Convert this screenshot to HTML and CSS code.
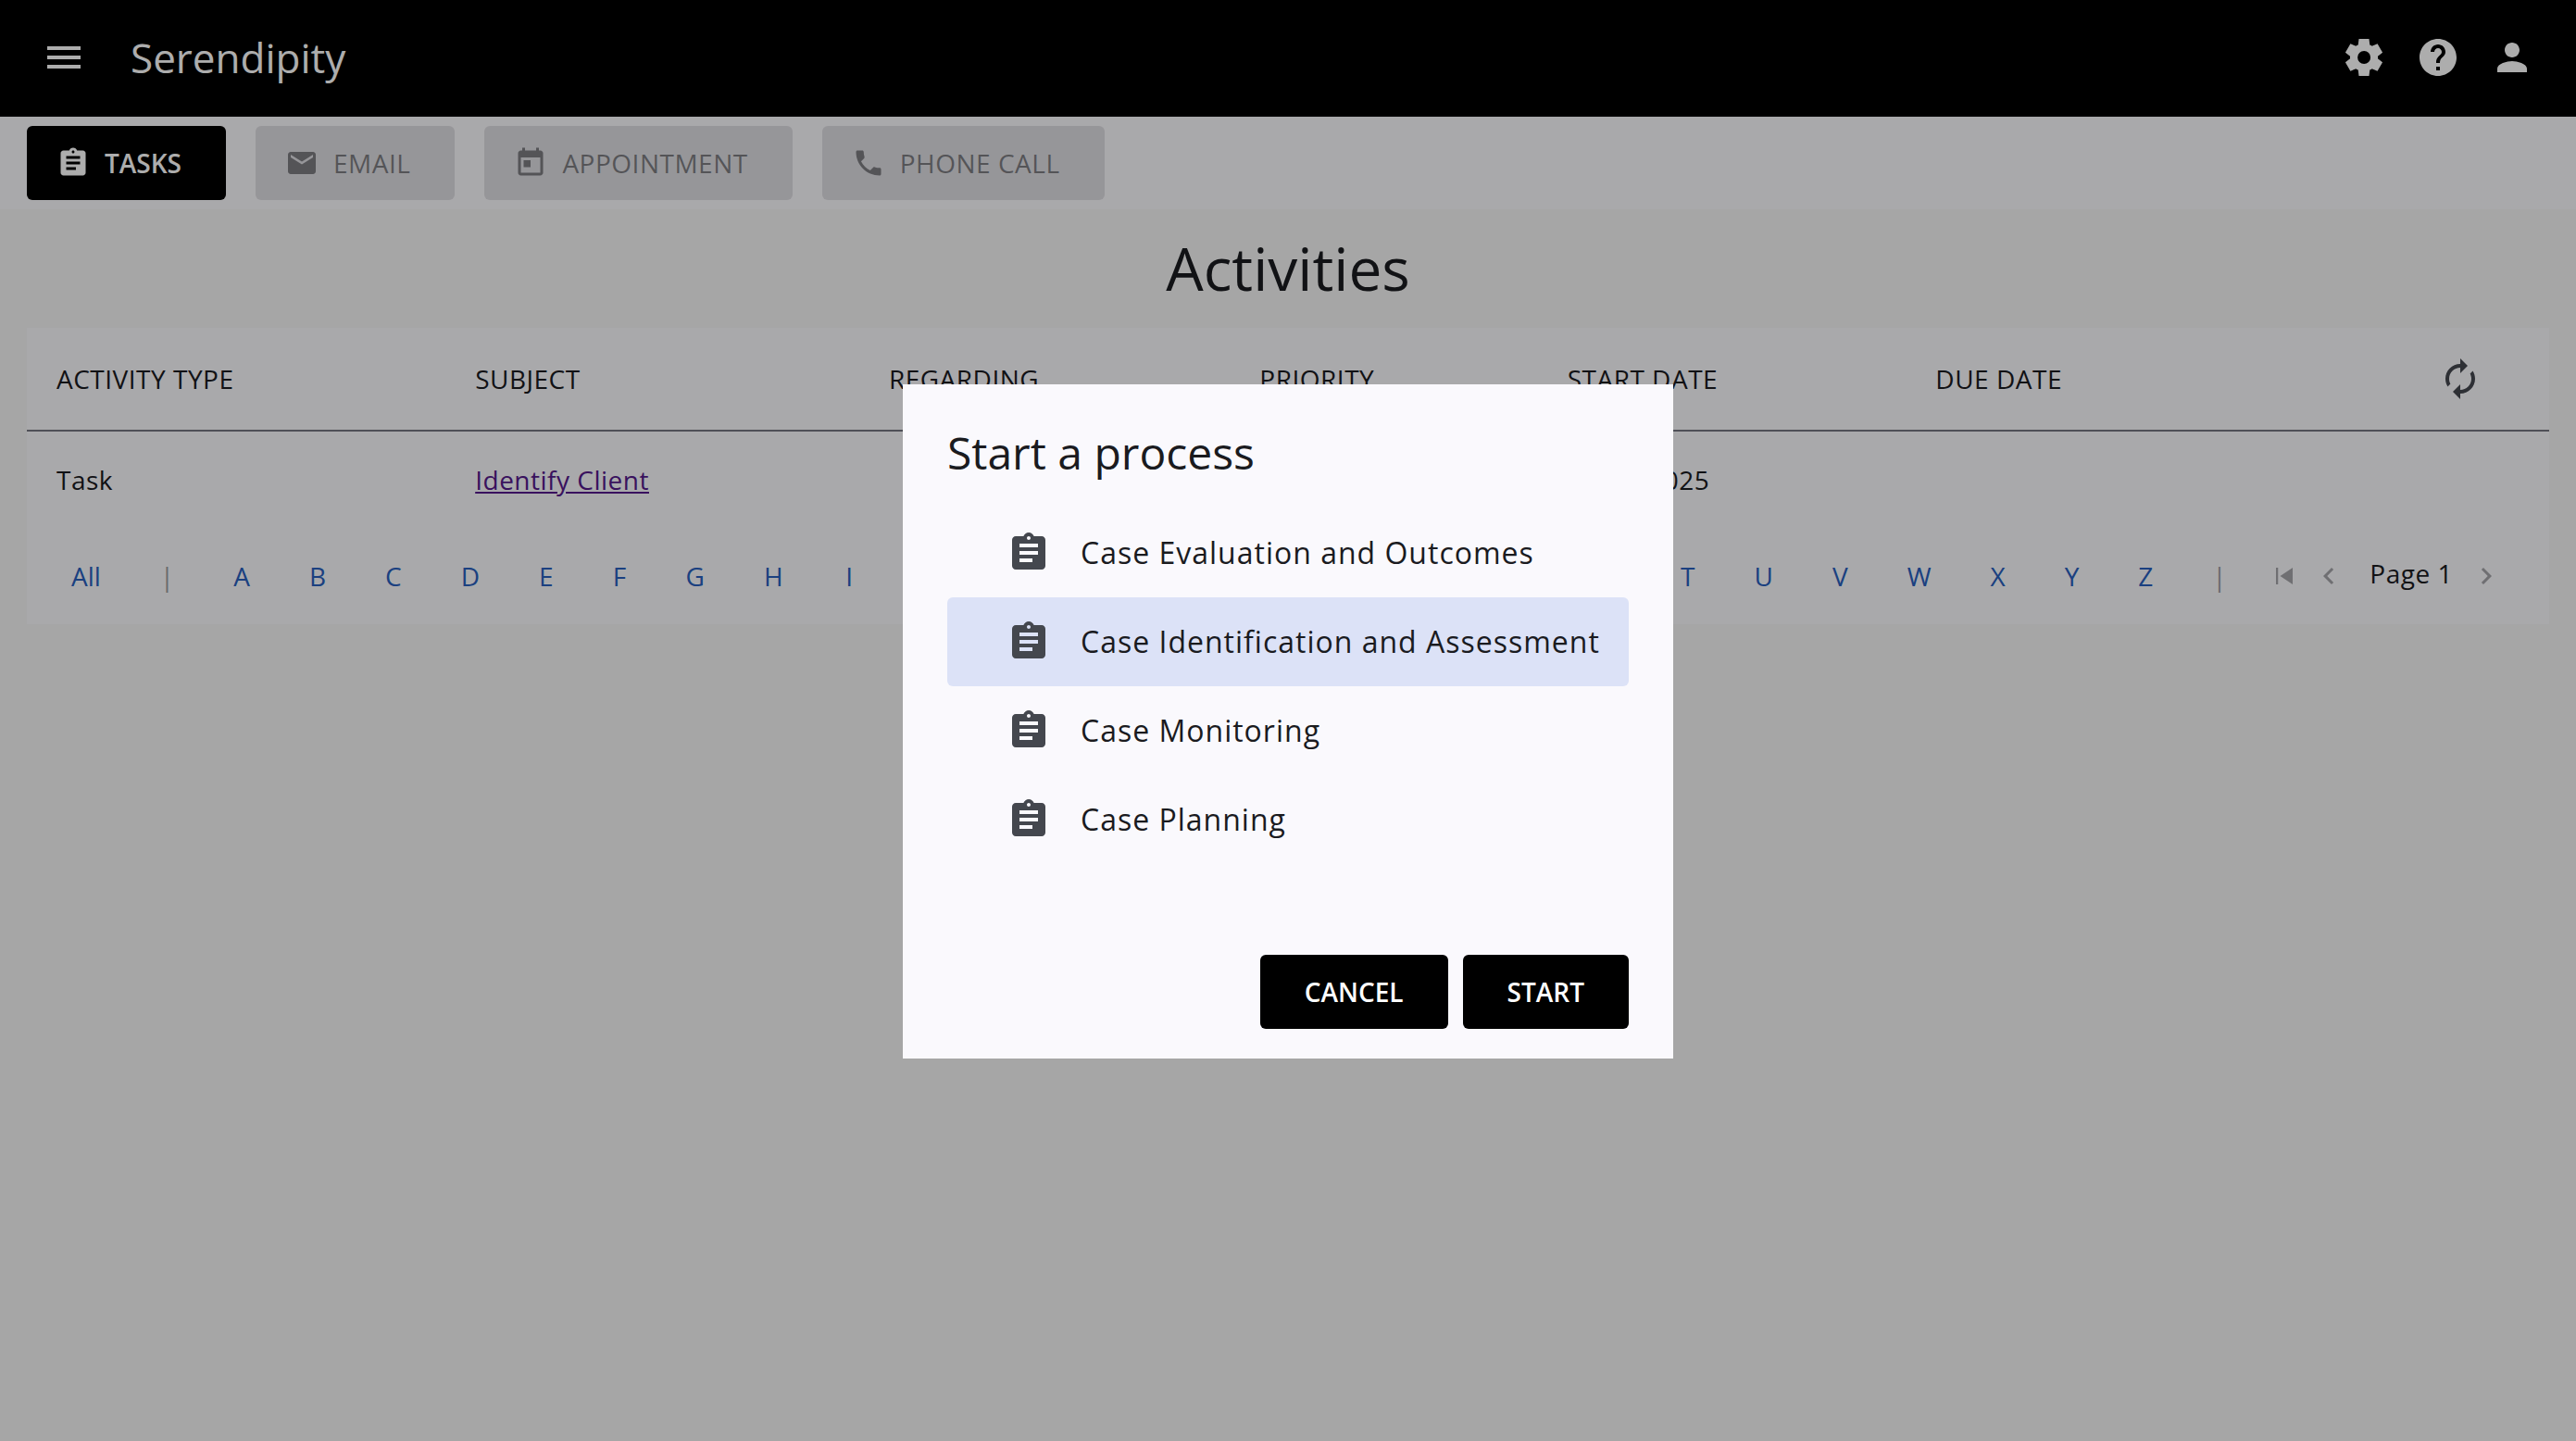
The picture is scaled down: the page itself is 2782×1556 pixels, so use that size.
FILE: index.html
```html
<!DOCTYPE html>
<html lang="en">
<head>
<meta charset="utf-8">
<meta name="viewport" content="width=device-width, initial-scale=1">
<title>Serendipity</title>
<link rel="stylesheet" href="styles.css">
</head>
<body>
<svg class="sprite" aria-hidden="true">
  <symbol id="menu" viewBox="0 0 24 24"><path d="M3 18h18v-2H3v2zm0-5h18v-2H3v2zm0-7v2h18V6H3z"/></symbol>
  <symbol id="settings" viewBox="0 -960 960 960"><path d="m370-80-16-128q-13-5-24.5-12T307-235l-119 50L78-375l103-78q-1-7-1-13.5v-27q0-6.500 1-13.500L78-585l110-190 119 50q11-8 23-15t24-12l16-128h220l16 128q13 5 24.500 12t22.500 15l119-50 110 190-103 78q1 7 1 13.500v27q0 6.500-2 13.500l103 78-110 190-118-50q-11 8-23 15t-24 12L590-80H370Zm112-260q58 0 99-41t41-99q0-58-41-99t-99-41q-59 0-99.500 41T342-480q0 58 40.500 99t99.500 41Z"/></symbol>
  <symbol id="help" viewBox="0 0 24 24"><path d="M12 2C6.480 2 2 6.480 2 12s4.480 10 10 10 10-4.480 10-10S17.520 2 12 2zm1 17h-2v-2h2v2zm2.070-7.750l-.9.920C13.450 12.900 13 13.500 13 15h-2v-.5c0-1.100.45-2.100 1.170-2.830l1.240-1.260c.37-.36.59-.86.59-1.410 0-1.100-.9-2-2-2s-2 .9-2 2H8c0-2.210 1.790-4 4-4s4 1.790 4 4c0 .88-.36 1.680-.93 2.250z"/></symbol>
  <symbol id="person" viewBox="0 0 24 24"><path d="M12 12c2.210 0 4-1.790 4-4s-1.790-4-4-4-4 1.790-4 4 1.790 4 4 4zm0 2c-2.670 0-8 1.340-8 4v2h16v-2c0-2.660-5.330-4-8-4z"/></symbol>
  <symbol id="assignment" viewBox="0 0 24 24"><path d="M19 3h-4.180C14.400 1.840 13.300 1 12 1c-1.300 0-2.400.84-2.820 2H5c-1.100 0-2 .9-2 2v14c0 1.100.9 2 2 2h14c1.100 0 2-.9 2-2V5c0-1.100-.9-2-2-2zm-7 0c.55 0 1 .45 1 1s-.45 1-1 1-1-.45-1-1 .45-1 1-1zm2 14H7v-2h7v2zm3-4H7v-2h10v2zm0-4H7V7h10v2z"/></symbol>
  <symbol id="mail" viewBox="0 0 24 24"><path d="M20 4H4c-1.100 0-1.990.9-1.990 2L2 18c0 1.100.9 2 2 2h16c1.100 0 2-.9 2-2V6c0-1.100-.9-2-2-2zm0 4l-8 5-8-5V6l8 5 8-5v2z"/></symbol>
  <symbol id="today" viewBox="0 0 24 24"><path d="M19 3h-1V1h-2v2H8V1H6v2H5c-1.110 0-1.990.9-1.990 2L3 19c0 1.100.89 2 2 2h14c1.100 0 2-.9 2-2V5c0-1.100-.9-2-2-2zm0 16H5V8h14v11zM7 10h5v5H7z"/></symbol>
  <symbol id="phone" viewBox="0 0 24 24"><path d="M6.620 10.790c1.440 2.830 3.760 5.140 6.590 6.590l2.200-2.200c.27-.27.67-.36 1.020-.24 1.120.37 2.330.57 3.570.57.55 0 1 .45 1 1V20c0 .55-.45 1-1 1-9.390 0-17-7.610-17-17 0-.55.45-1 1-1h3.500c.55 0 1 .45 1 1 0 1.250.2 2.450.57 3.570.11.35.03.74-.25 1.020l-2.200 2.200z"/></symbol>
  <symbol id="autorenew" viewBox="0 0 24 24"><path d="M12 6v3l4-4-4-4v3c-4.420 0-8 3.580-8 8 0 1.570.46 3.030 1.240 4.260L6.700 14.800c-.45-.83-.7-1.790-.7-2.800 0-3.310 2.690-6 6-6zm6.760 1.740L17.300 9.200c.44.840.7 1.790.7 2.800 0 3.310-2.690 6-6 6v-3l-4 4 4 4v-3c4.420 0 8-3.580 8-8 0-1.570-.46-3.030-1.240-4.260z"/></symbol>
  <symbol id="first" viewBox="0 0 24 24"><path d="M6 6h1.500v12H6zm3 6l9 6V6z"/></symbol>
  <symbol id="before" viewBox="0 0 24 24"><path d="M15.410 7.410L14 6l-6 6 6 6 1.410-1.410L10.830 12z"/></symbol>
  <symbol id="next" viewBox="0 0 24 24"><path d="M10 6L8.590 7.410 13.170 12l-4.580 4.590L10 18l6-6z"/></symbol>
</svg>

<header class="app-bar">
  <button class="icon-button" aria-label="Menu"><svg class="icon"><use href="#menu"/></svg></button>
  <span class="brand">Serendipity</span>
  <div class="app-actions">
    <button class="icon-button" aria-label="Settings"><svg class="icon"><use href="#settings"/></svg></button>
    <button class="icon-button" aria-label="Help"><svg class="icon"><use href="#help"/></svg></button>
    <button class="icon-button" aria-label="Account"><svg class="icon"><use href="#person"/></svg></button>
  </div>
</header>

<nav class="toolbar" aria-label="Create activity">
  <button class="button with-icon"><svg class="icon-small"><use href="#assignment"/></svg>TASKS</button>
  <button class="button with-icon" disabled><svg class="icon-small"><use href="#mail"/></svg>EMAIL</button>
  <button class="button with-icon" disabled><svg class="icon-small"><use href="#today"/></svg>APPOINTMENT</button>
  <button class="button with-icon" disabled><svg class="icon-small"><use href="#phone"/></svg>PHONE CALL</button>
</nav>

<main class="content">
  <h1 class="page-title">Activities</h1>
  <section class="panel">
    <table class="activities">
      <colgroup>
        <col class="col-type"><col class="col-subject"><col class="col-regarding"><col class="col-priority"><col class="col-start"><col class="col-due"><col class="col-refresh">
      </colgroup>
      <thead>
        <tr>
          <th>ACTIVITY TYPE</th><th>SUBJECT</th><th>REGARDING</th><th>PRIORITY</th><th>START DATE</th><th>DUE DATE</th>
          <th class="refresh-cell"><button class="icon-button refresh" aria-label="Refresh"><svg class="icon"><use href="#autorenew"/></svg></button></th>
        </tr>
      </thead>
      <tbody>
        <tr><td>Task</td><td><a class="subject-link" href="#identify-client">Identify Client</a></td><td></td><td></td><td>01/01/2025</td><td></td><td></td></tr>
      </tbody>
    </table>
    <div class="pager">
      <div class="letters">
        <button class="letter">All</button><button class="letter" disabled>|</button><button class="letter">A</button><button class="letter">B</button><button class="letter">C</button><button class="letter">D</button><button class="letter">E</button><button class="letter">F</button><button class="letter">G</button><button class="letter">H</button><button class="letter">I</button><button class="letter">J</button><button class="letter">K</button><button class="letter">L</button><button class="letter">M</button><button class="letter">N</button><button class="letter">O</button><button class="letter">P</button><button class="letter">Q</button><button class="letter">R</button><button class="letter">S</button><button class="letter">T</button><button class="letter">U</button><button class="letter">V</button><button class="letter">W</button><button class="letter">X</button><button class="letter">Y</button><button class="letter">Z</button><button class="letter" disabled>|</button>
      </div>
      <div class="page-nav">
        <button class="page-button" disabled aria-label="First page"><svg class="icon-small"><use href="#first"/></svg></button>
        <button class="page-button" disabled aria-label="Previous page"><svg class="icon-small"><use href="#before"/></svg></button>
        <span class="page-label">Page 1</span>
        <button class="page-button" disabled aria-label="Next page"><svg class="icon-small"><use href="#next"/></svg></button>
      </div>
    </div>
  </section>
</main>

<div class="backdrop">
  <div class="dialog" role="dialog" aria-modal="true" aria-labelledby="dialog-title">
    <h2 class="dialog-title" id="dialog-title">Start a process</h2>
    <div class="process-list" role="listbox" aria-labelledby="dialog-title">
      <button class="process" role="option" aria-selected="false"><svg class="icon"><use href="#assignment"/></svg>Case Evaluation and Outcomes</button>
      <button class="process selected" role="option" aria-selected="true"><svg class="icon"><use href="#assignment"/></svg>Case Identification and Assessment</button>
      <button class="process" role="option" aria-selected="false"><svg class="icon"><use href="#assignment"/></svg>Case Monitoring</button>
      <button class="process" role="option" aria-selected="false"><svg class="icon"><use href="#assignment"/></svg>Case Planning</button>
    </div>
    <div class="dialog-actions">
      <button class="button">CANCEL</button>
      <button class="button">START</button>
    </div>
  </div>
</div>
</body>
</html>
```
FILE: styles.css
```css
:root {
  --surface: #faf9fd;
  --text: #1a1b1f;
  --muted: #44474e;
  --outline: #757780;
  --link: #285fbd;
  --gutter: 29px;
  --tracking: 0.018em;
}

* { box-sizing: border-box; }

body {
  margin: 0;
  min-height: 100vh;
  background: #f5f5f5;
  color: var(--text);
  font: 400 28px/40px "Open Sans", "Noto Sans", sans-serif;
}

button {
  margin: 0;
  padding: 0;
  border: 0;
  background: none;
  color: inherit;
  font: inherit;
  cursor: pointer;
}

button:disabled { cursor: default; }

.sprite { display: none; }

.icon, .icon-small {
  display: block;
  flex: none;
  fill: currentColor;
}
.icon { width: 48px; height: 48px; }
.icon-small { width: 36px; height: 36px; }

.icon-button {
  display: flex;
  align-items: center;
  justify-content: center;
  width: 80px;
  height: 80px;
}

.app-bar {
  display: flex;
  align-items: center;
  height: 126px;
  padding: 0 var(--gutter) 2px;
  background: #000;
  color: #fff;
}

.brand {
  margin-left: 32px;
  font-size: 44px;
  line-height: 56px;
}

.app-actions {
  display: flex;
  margin-left: auto;
}

.toolbar {
  display: flex;
  gap: 32px;
  padding: 10px var(--gutter);
  background: var(--surface);
}

.button {
  display: flex;
  align-items: center;
  gap: 16px;
  height: 80px;
  padding: 0 48px;
  border-radius: 6px;
  background: #000;
  color: #fff;
  font-weight: 600;
}
.button.with-icon { padding-left: 32px; }
.button:disabled {
  background: rgba(26, 27, 31, 0.12);
  color: rgba(26, 27, 31, 0.5);
  font-weight: 500;
  letter-spacing: var(--tracking);
}

.content { padding: 0 var(--gutter); }

.page-title {
  margin: 0;
  padding: 16px 0;
  font-size: 64px;
  font-weight: 400;
  line-height: 96px;
  text-align: center;
}

.panel { background: var(--surface); }

.activities {
  width: 100%;
  border-spacing: 0;
  table-layout: fixed;
  letter-spacing: var(--tracking);
}
.activities th, .activities td {
  height: 104px;
  padding: 0 32px;
  text-align: left;
  white-space: nowrap;
}
.activities th {
  height: 112px;
  border-bottom: 2px solid var(--outline);
  font-weight: 500;
}
.activities .refresh-cell { padding-right: 56px; }
.col-type { width: 16.6%; }
.col-subject { width: 16.4%; }
.col-regarding { width: 14.7%; }
.col-priority { width: 12.2%; }
.col-start { width: 14.6%; }
.col-due { width: 15%; }

.refresh {
  margin-left: auto;
  color: var(--muted);
}

.subject-link { color: #551a8b; }

.pager {
  display: flex;
  align-items: center;
  justify-content: space-between;
  height: 104px;
  padding: 0 44px 0 16px;
  letter-spacing: var(--tracking);
}

.letters { display: flex; }
.letter {
  flex: none;
  min-width: 79px;
  height: 80px;
  padding: 0 32px;
  color: var(--link);
  font-weight: 500;
}
.letter:disabled { color: #9c9ca1; }

.page-nav {
  display: flex;
  flex: none;
  align-items: center;
}
.page-button {
  padding: 6px;
  color: #a4a4a8;
}
.page-label {
  padding: 0 12px 6px 20px;
  white-space: nowrap;
}

.backdrop {
  position: fixed;
  inset: 0;
  display: flex;
  align-items: center;
  justify-content: center;
  padding-top: 2px;
  background: rgba(0, 0, 0, 0.32);
}

.dialog {
  width: 832px;
  max-width: 80vw;
  padding: 42px 48px 32px;
  background: var(--surface);
}

.dialog-title {
  margin: 0;
  padding-bottom: 28px;
  font-size: 48px;
  font-weight: 400;
  line-height: 64px;
}

.process {
  display: flex;
  align-items: center;
  gap: 32px;
  width: 100%;
  height: 96px;
  padding: 0 32px 0 64px;
  border-radius: 6px;
  font-size: 32px;
  letter-spacing: 1px;
  white-space: nowrap;
}
.process .icon { color: var(--muted); }
.process.selected { background: #dce2f7; }

.dialog-actions {
  display: flex;
  justify-content: flex-end;
  gap: 16px;
  padding-top: 98px;
}
```
